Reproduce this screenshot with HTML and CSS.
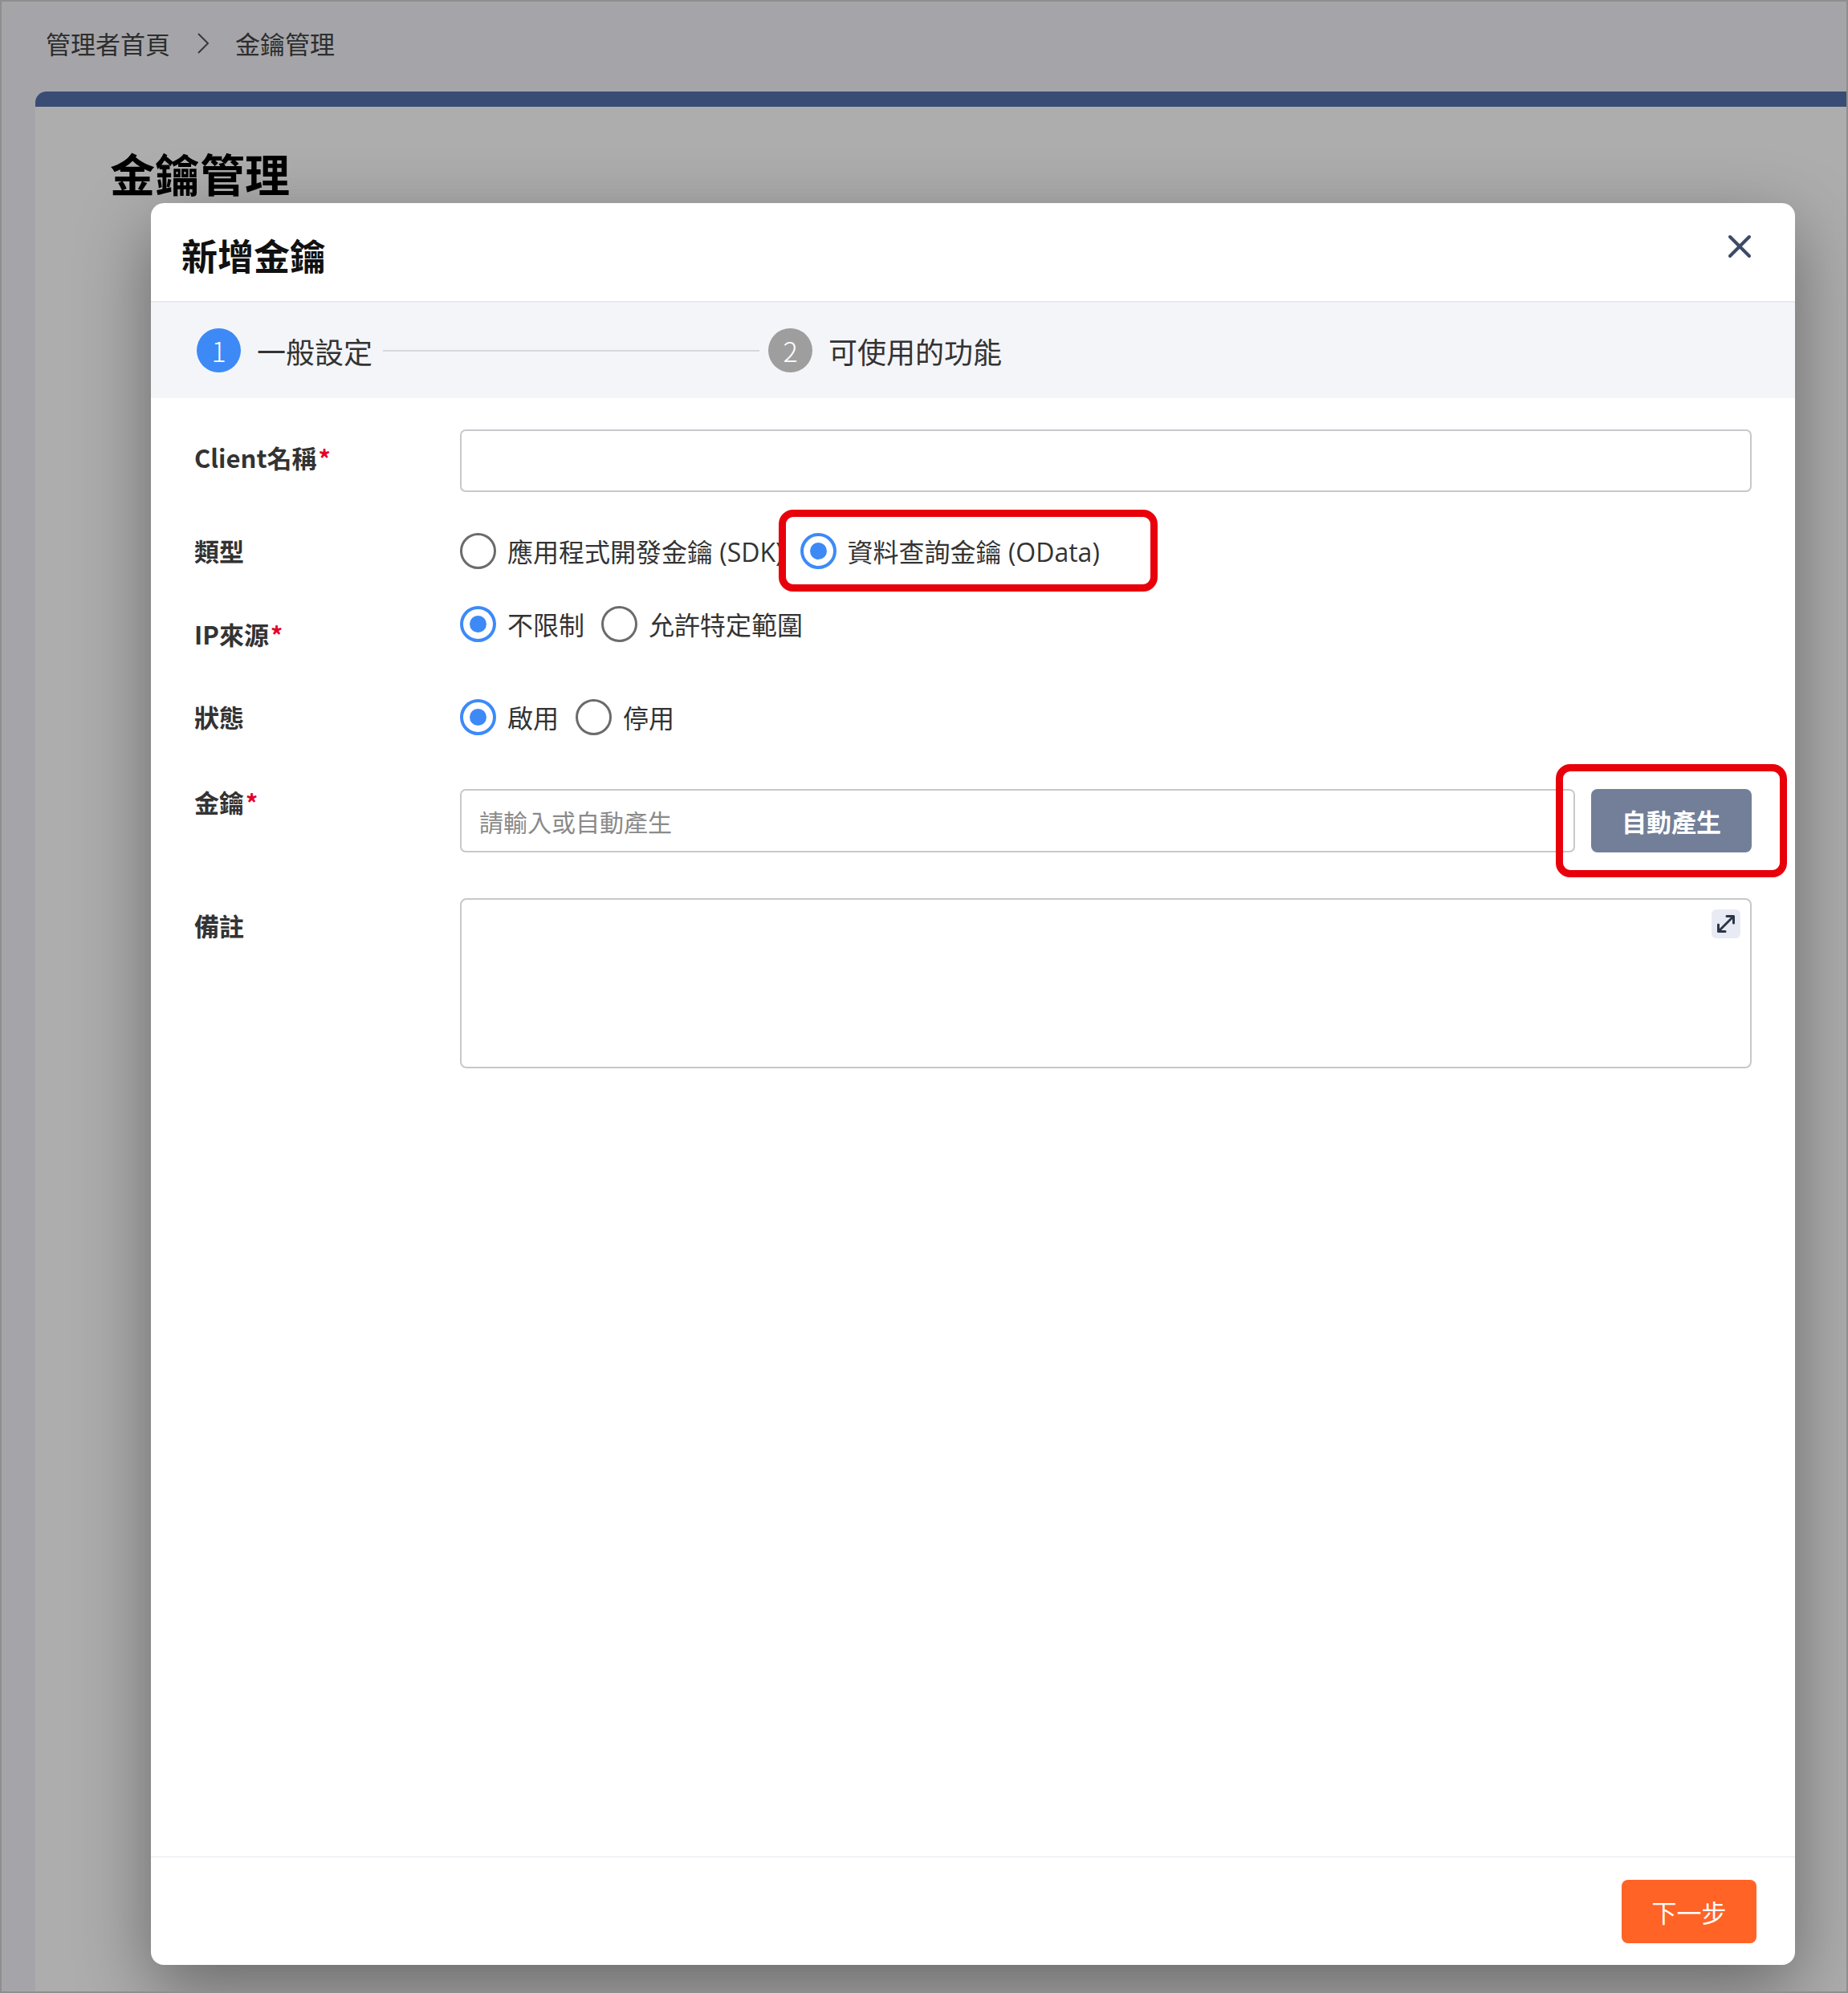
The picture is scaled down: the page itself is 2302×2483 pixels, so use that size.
FILE: index.html
```html
<!DOCTYPE html>
<html lang="zh-Hant">
<head>
    <meta charset="UTF-8">
    <meta name="viewport" content="width=device-width, initial-scale=1.0">
    <title>金鑰管理</title>
    <link rel="stylesheet" href="styles.css">
</head>
<body>
    <div class="frame">
        <!-- Breadcrumb -->
        <div class="breadcrumb">
            <span>管理者首頁</span>
            <svg class="crumb-sep" width="16" height="28" viewBox="0 0 16 28">
                <polyline points="2,2 14,14 2,26" fill="none" stroke="#555" stroke-width="2"/>
            </svg>
            <span>金鑰管理</span>
        </div>

        <div class="card">
            <h1 class="page-title">金鑰管理</h1>
        </div>

        <!-- Modal -->
        <div class="overlay">
            <div class="modal">
                <div class="modal-header">
                    <h2 class="modal-title">新增金鑰</h2>
                    <svg class="close-icon" width="30" height="30" viewBox="0 0 30 30">
                        <line x1="3" y1="3" x2="27" y2="27" stroke="#3c4b66" stroke-width="4" stroke-linecap="round"/>
                        <line x1="27" y1="3" x2="3" y2="27" stroke="#3c4b66" stroke-width="4" stroke-linecap="round"/>
                    </svg>
                </div>

                <div class="steps">
                    <span class="step-num active">1</span>
                    <span class="step-text">一般設定</span>
                    <span class="step-line"></span>
                    <span class="step-num">2</span>
                    <span class="step-text">可使用的功能</span>
                </div>

                <div class="modal-body">
                    <div class="form-row row-name">
                        <label class="form-label">Client名稱<span class="req">*</span></label>
                        <input class="text-input" type="text">
                    </div>

                    <div class="form-row row-type">
                        <label class="form-label">類型</label>
                        <div class="radio-group">
                            <span class="radio-option"><span class="radio"></span>應用程式開發金鑰 (SDK)</span>
                            <span class="radio-option"><span class="radio checked"></span>資料查詢金鑰 (OData)</span>
                        </div>
                    </div>

                    <div class="form-row row-ip">
                        <label class="form-label">IP來源<span class="req">*</span></label>
                        <div class="radio-group">
                            <span class="radio-option"><span class="radio checked"></span>不限制</span>
                            <span class="radio-option"><span class="radio"></span>允許特定範圍</span>
                        </div>
                    </div>

                    <div class="form-row row-status">
                        <label class="form-label">狀態</label>
                        <div class="radio-group">
                            <span class="radio-option"><span class="radio checked"></span>啟用</span>
                            <span class="radio-option"><span class="radio"></span>停用</span>
                        </div>
                    </div>

                    <div class="form-row row-key">
                        <label class="form-label">金鑰<span class="req">*</span></label>
                        <div class="key-field">
                            <input class="text-input" type="text" placeholder="請輸入或自動產生">
                            <button class="btn-generate">自動產生</button>
                        </div>
                    </div>

                    <div class="form-row row-note">
                        <label class="form-label">備註</label>
                        <div class="textarea-wrap">
                            <textarea class="text-area"></textarea>
                            <span class="expand-btn">
                                <svg width="36" height="36" viewBox="0 0 36 36">
                                    <line x1="9" y1="27" x2="27" y2="9" stroke="#2d3648" stroke-width="3" stroke-linecap="round"/>
                                    <polyline points="19,8.5 27.5,8.5 27.5,17" fill="none" stroke="#2d3648" stroke-width="3" stroke-linecap="round" stroke-linejoin="round"/>
                                    <polyline points="8.5,19 8.5,27.5 17,27.5" fill="none" stroke="#2d3648" stroke-width="3" stroke-linecap="round" stroke-linejoin="round"/>
                                </svg>
                            </span>
                        </div>
                    </div>
                </div>

                <div class="modal-footer">
                    <button class="btn-next">下一步</button>
                </div>

                <!-- highlight marks -->
                <div class="mark mark-type"></div>
                <div class="mark mark-generate"></div>
            </div>
        </div>
    </div>
</body>
</html>
```

FILE: styles.css
```css
body {
    margin: 0;
    padding: 0;
    font-family: "Noto Sans CJK TC", "Noto Sans", sans-serif;
    color: #333;
}

.frame {
    position: relative;
    height: 2483px;
    box-sizing: border-box;
    border: 2px solid #8e8e8e;
    background-color: #f3f4f9;
    overflow: hidden;
    display: flex;
    flex-direction: column;
}

.breadcrumb {
    display: flex;
    align-items: flex-start;
    height: 112px;
    box-sizing: border-box;
    padding: 35px 0 0 55px;
    font-size: 31px;
    line-height: 34px;
    color: #444;
}

.crumb-sep {
    margin: 3px 32px 0 33px;
}

.card {
    flex: 1;
    margin-left: 42px;
    background-color: #fff;
    border-top: 19px solid #5470ab;
    border-top-left-radius: 14px;
}

.page-title {
    margin: 0;
    padding: 54px 0 0 93px;
    font-size: 56px;
    line-height: 56px;
    font-weight: bold;
    color: #000;
}

.overlay {
    position: absolute;
    top: 0;
    left: 0;
    right: 0;
    bottom: 0;
    background-color: rgba(0, 0, 0, 0.32);
    padding: 251px 0 0 186px;
    box-sizing: border-box;
}

.modal {
    position: relative;
    width: 2048px;
    height: 2195px;
    background-color: #fff;
    border-radius: 16px;
    box-shadow: 0 30px 90px rgba(0, 0, 0, 0.4);
    display: flex;
    flex-direction: column;
}

.modal-header {
    height: 124px;
    box-sizing: border-box;
    border-bottom: 2px solid #e8eaf0;
    display: flex;
    align-items: center;
    justify-content: space-between;
    padding: 0 54px 0 38px;
}

.modal-title {
    margin: 6px 0 0 0;
    font-size: 45px;
    line-height: 45px;
    font-weight: bold;
    color: #111;
}

.close-icon {
    margin-bottom: 14px;
}

.steps {
    height: 119px;
    background-color: #f4f5f9;
    display: flex;
    align-items: center;
    padding-left: 57px;
}

.step-num {
    width: 55px;
    height: 55px;
    border-radius: 50%;
    background-color: #9e9e9e;
    color: #fff;
    font-size: 34px;
    font-weight: 300;
    display: flex;
    align-items: center;
    justify-content: center;
}

.step-num.active {
    background-color: #3d8af7;
}

.step-text {
    margin-left: 20px;
    font-size: 36px;
    color: #333;
}

.step-line {
    width: 469px;
    height: 2px;
    background-color: #d5d7dc;
    margin: 0 11px 0 13px;
}

.modal-body {
    flex: 1;
    padding: 39px 54px 0 54px;
}

.form-row {
    display: flex;
    align-items: flex-start;
}

.form-label {
    width: 331px;
    flex-shrink: 0;
    font-size: 31px;
    line-height: 48px;
    font-weight: bold;
    color: #333;
}

.req {
    color: #e4002b;
    font-size: 30px;
    font-weight: bold;
    margin-left: 2px;
}

.text-input {
    flex: 1;
    height: 78px;
    box-sizing: border-box;
    border: 2px solid #c6c8cc;
    border-radius: 7px;
    padding: 0 22px;
    font-family: inherit;
    font-size: 30px;
    color: #333;
    outline: none;
}

.text-input::placeholder {
    color: #8a8a8a;
}

.row-name .form-label {
    margin-top: 11px;
}

.row-type {
    margin-top: 49px;
}

.row-ip {
    margin-top: 43px;
}

.row-ip .form-label {
    margin-top: 13px;
}

.row-status {
    margin-top: 55px;
}

.row-key {
    margin-top: 58px;
}

.row-note {
    margin-top: 57px;
}

.row-note .form-label {
    margin-top: 10px;
}

.radio-group {
    display: flex;
    align-items: center;
    height: 48px;
    gap: 21px;
}

.radio-option {
    display: flex;
    align-items: center;
    gap: 14px;
    font-family: "Open Sans", "Noto Sans CJK TC", sans-serif;
    font-size: 32px;
    color: #333;
}

.radio {
    width: 45px;
    height: 45px;
    box-sizing: border-box;
    border: 3.5px solid #6b6b6b;
    border-radius: 50%;
    display: flex;
    align-items: center;
    justify-content: center;
}

.radio.checked {
    border: 4px solid #3d8af7;
}

.radio.checked::after {
    content: "";
    width: 21px;
    height: 21px;
    border-radius: 50%;
    background-color: #3d8af7;
}

.key-field {
    flex: 1;
    display: flex;
    gap: 20px;
    margin-top: 8px;
}

.key-field .text-input {
    height: 79px;
}

.btn-generate {
    width: 200px;
    height: 79px;
    border: none;
    border-radius: 8px;
    background-color: #737f98;
    color: #fff;
    font-family: inherit;
    font-size: 31px;
    font-weight: bold;
}

.textarea-wrap {
    flex: 1;
    position: relative;
}

.text-area {
    display: block;
    width: 100%;
    height: 212px;
    box-sizing: border-box;
    border: 2px solid #c6c8cc;
    border-radius: 8px;
    resize: none;
    outline: none;
}

.expand-btn {
    position: absolute;
    top: 14px;
    right: 14px;
    width: 36px;
    height: 36px;
    border-radius: 6px;
    background-color: #e8ebf3;
    display: flex;
}

.modal-footer {
    height: 135px;
    box-sizing: border-box;
    border-top: 1px solid #e6e8ee;
    display: flex;
    justify-content: flex-end;
    padding: 28px 48px 0 0;
}

.btn-next {
    width: 168px;
    height: 79px;
    border: none;
    border-radius: 8px;
    background-color: #ff6326;
    color: #fff;
    font-family: inherit;
    font-size: 31px;
}

.mark {
    position: absolute;
    border: 9px solid #e8000b;
    border-radius: 18px;
    box-sizing: border-box;
}

.mark-type {
    left: 782px;
    top: 382px;
    width: 472px;
    height: 102px;
}

.mark-generate {
    left: 1750px;
    top: 699px;
    width: 288px;
    height: 141px;
}
```
